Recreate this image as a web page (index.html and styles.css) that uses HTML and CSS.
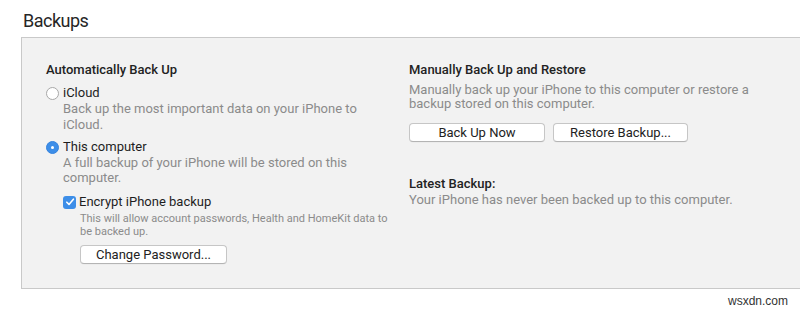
FILE: index.html
```html
<!DOCTYPE html>
<html>
<head>
<meta charset="utf-8">
<link rel="stylesheet" href="styles.css">
</head>
<body>
<div class="page">
  <h1 class="title">Backups</h1>
  <div class="box">
    <div class="col left">
      <div class="heading">Automatically Back Up</div>
      <div class="option first">
        <span class="radio"></span><span class="label">iCloud</span>
      </div>
      <div class="desc">Back up the most important data on your iPhone to<br>iCloud.</div>
      <div class="option second">
        <span class="radio on"></span><span class="label">This computer</span>
      </div>
      <div class="desc desc2">A full backup of your iPhone will be stored on this<br>computer.</div>
      <div class="sub">
        <div class="check-row">
          <span class="check"><svg width="10" height="10" viewBox="0 0 10 10"><path d="M1.8 5.2 L4 7.4 L8.4 2.2" fill="none" stroke="#fff" stroke-width="1.6" stroke-linecap="round" stroke-linejoin="round"/></svg></span><span class="label">Encrypt iPhone backup</span>
        </div>
        <div class="small">This will allow account passwords, Health and HomeKit data to<br>be backed up.</div>
        <button class="btn pw">Change Password...</button>
      </div>
    </div>
    <div class="col right">
      <div class="heading">Manually Back Up and Restore</div>
      <div class="desc rdesc">Manually back up your iPhone to this computer or restore a<br>backup stored on this computer.</div>
      <div class="btns">
        <button class="btn b1">Back Up Now</button>
        <button class="btn b2">Restore Backup...</button>
      </div>
      <div class="heading latest">Latest Backup:</div>
      <div class="desc">Your iPhone has never been backed up to this computer.</div>
    </div>
  </div>
  <div class="mark">wsxdn.com</div>
</div>
</body>
</html>
```
FILE: styles.css
```css
html, body { margin: 0; padding: 0; background: #fff; }
body { font-family: Roboto, "Liberation Sans", sans-serif; color: #222; width: 800px; height: 310px; overflow: hidden; }
.page { padding: 10px 0 0 21px; }
.title { margin: 0 0 0 2px; font-size: 18px; font-weight: 400; line-height: 22px; height: 27px; color: #262626; letter-spacing: -0.5px; }
.box { width: 756px; height: 250px; background: #f2f2f2; border: 1px solid #c9c9c9; display: grid; grid-template-columns: 363px 1fr; padding: 0 0 0 24px; box-sizing: content-box; }
.col { padding-top: 24px; font-size: 13px; }
.heading { font-weight: 500; line-height: 16px; color: #222; }
.option { display: flex; align-items: center; line-height: 16px; }
.option.first { margin-top: 7px; }
.option.second { margin-top: 6px; }
.radio { width: 11px; height: 11px; border: 1px solid #a8a8a8; border-radius: 50%; background: #fff; margin-right: 4px; box-sizing: content-box; display: inline-block; position: relative; }
.radio.on { background: #3d8ee8; border-color: #3583de; }
.radio.on::after { content: ""; position: absolute; left: 4px; top: 4px; width: 3px; height: 3px; border-radius: 50%; background: #fff; }
.label { color: #1e1e1e; }
.desc { color: #8b8b8b; line-height: 16px; padding-left: 17px; }
.desc2 { line-height: 15px; }
.sub { padding-left: 17px; }
.check-row { display: flex; align-items: center; line-height: 16px; margin-top: 9px; }
.check { width: 13px; height: 13px; border-radius: 3px; background: #3d8ee8; margin-right: 3px; display: inline-flex; align-items: center; justify-content: center; }
.small { font-size: 11px; color: #8b8b8b; line-height: 13px; padding-left: 17px; margin-top: 2px; }
.btn { font-family: inherit; font-size: 13px; color: #222; background: #fff; border: 1px solid #c6c6c6; border-bottom-color: #b4b4b4; border-radius: 4px; height: 19px; padding: 0; line-height: 16px; box-shadow: 0 0.5px 0 rgba(0,0,0,0.05); }
.pw { width: 147px; margin: 7px 0 0 17px; display: block; }
.right .desc { padding-left: 0; }
.rdesc { line-height: 14px; margin-top: 5px; }
.btns { display: flex; gap: 8px; margin-top: 12px; }
.b1 { width: 136px; }
.b2 { width: 135px; }
.latest { margin-top: 34px; }
.mark { font-size: 12px; color: #333; text-align: right; padding-right: 12px; margin-top: 5px; font-family: "Liberation Sans", sans-serif; }
```
